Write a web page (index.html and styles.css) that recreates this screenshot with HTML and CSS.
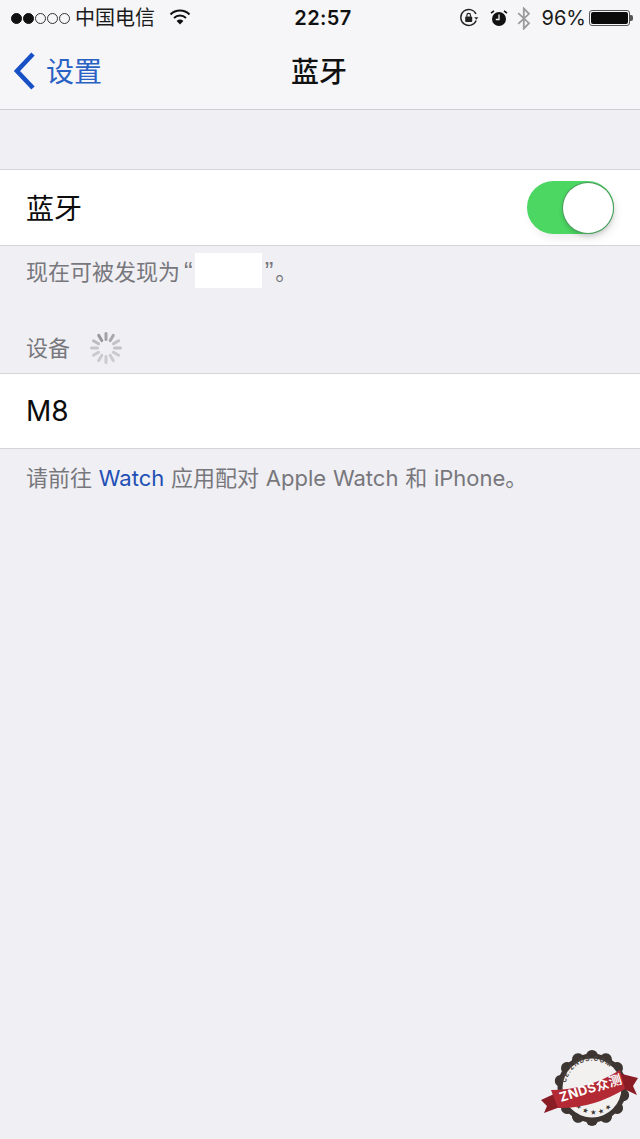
FILE: index.html
```html
<!DOCTYPE html>
<html lang="zh">
<head>
<meta charset="utf-8">
<title>蓝牙</title>
<link rel="stylesheet" href="styles.css">
</head>
<body>
<div class="screen">
  <header class="topbar">
    <div class="status">
      <div class="status-left">
        <span class="dots"><i class="dot on"></i><i class="dot on"></i><i class="dot"></i><i class="dot"></i><i class="dot"></i></span>
        <span class="carrier">中国电信</span>
        <svg class="wifi" width="22" height="16" viewBox="0 0 22 16"><path d="M1.500 5.500a13.500 13.500 0 0 1 19 0" fill="none" stroke="#111" stroke-width="2"/><path d="M5 9a8.600 8.600 0 0 1 12 0" fill="none" stroke="#111" stroke-width="2"/><path d="M11 15.500 7.600 12a4.800 4.800 0 0 1 6.800 0Z" fill="#111"/></svg>
      </div>
      <span class="time">22:57</span>
      <div class="status-right">
        <svg class="ico-lock" width="20" height="20" viewBox="0 0 20 20"><path d="M17.200 12.500A8 8 0 1 1 17 6" fill="none" stroke="#222" stroke-width="1.400"/><path d="m15.200 9.200 4.200 0-2.100 2.600Z" fill="#222"/><rect x="6.200" y="8.600" width="7" height="5.400" rx=".8" fill="#222"/><path d="M7.900 8.800V7.200a1.800 1.800 0 0 1 3.600 0v1.600" fill="none" stroke="#222" stroke-width="1.200"/></svg>
        <svg class="ico-alarm" width="18" height="18" viewBox="0 0 18 18"><circle cx="9" cy="10" r="7" fill="#111"/><path d="M9 5.500V10.500H5.800" fill="none" stroke="#f6f6f8" stroke-width="1.300"/><path d="M1 4.200 4 1.800M17 4.200 14 1.800" stroke="#111" stroke-width="1.600"/></svg>
        <svg class="ico-bt" width="14" height="23" viewBox="0 0 14 23"><path d="M1.200 6.200 12 16.200 6.800 21.600V1.400L12 6.800 1.200 16.800" fill="none" stroke="#9a9a9c" stroke-width="1.800"/></svg>
        <span class="pct">96%</span>
        <span class="battery"><span class="battery-fill"></span></span><span class="battery-cap"></span>
      </div>
    </div>
    <nav class="navbar">
      <div class="back">
        <svg class="chev" width="24" height="38" viewBox="0 0 24 38"><path d="M21 2 5 19l16 17" fill="none" stroke="#1650c4" stroke-width="4.600"/></svg>
        <span>设置</span>
      </div>
      <h1 class="title">蓝牙</h1>
    </nav>
  </header>

  <section class="row row-first">
    <span class="row-label">蓝牙</span>
    <span class="switch"><span class="knob"></span></span>
  </section>
  <p class="note note-first">现在可被发现为<span class="q">“</span><span class="redact"></span><span class="q">”</span><span class="stop">。</span></p>

  <div class="section-head">
    <span>设备</span>
    <svg class="spinner" width="34" height="34" viewBox="0 0 34 34">
      <g stroke="#c2c2c6" stroke-width="3" stroke-linecap="round">
        <path d="M17 2.500v6" stroke="#a3a3a7"/><path d="M24.250 4.400l-3 5.200" stroke="#a9a9ad"/><path d="M29.600 9.750l-5.200 3"/><path d="M31.500 17h-6"/><path d="M29.600 24.250l-5.200-3" stroke="#cbcbcf"/><path d="M24.250 29.600l-3-5.200" stroke="#cbcbcf"/><path d="M17 31.500v-6" stroke="#cbcbcf"/><path d="M9.750 29.600l3-5.200" stroke="#cbcbcf"/><path d="M4.400 24.250l5.200-3" stroke="#cbcbcf"/><path d="M2.500 17h6" stroke="#c6c6ca"/><path d="M4.400 9.750l5.200 3" stroke="#bcbcc0"/><path d="M9.750 4.400l3 5.200" stroke="#98989c"/>
      </g>
    </svg>
  </div>
  <section class="row">
    <span class="row-label">M8</span>
  </section>
  <p class="note note-last">请前往 <span class="link">Watch</span> 应用配对 Apple Watch 和 iPhone。</p>

  <svg class="stamp" width="100" height="80" viewBox="0 0 100 80">
    <defs>
      <path id="arc-top" d="M26 33A27 27 0 0 1 72 19"/>
      <path id="arc-low" d="M35 56A25 25 0 0 0 78 46"/>
    </defs>
    <g fill="#3c3532">
      <circle cx="52" cy="38" r="34.500"/>
      <circle cx="52" cy="6" r="6"/>
      <circle cx="52" cy="6" r="6" transform="rotate(25.700 52 38)"/>
      <circle cx="52" cy="6" r="6" transform="rotate(51.400 52 38)"/>
      <circle cx="52" cy="6" r="6" transform="rotate(77.100 52 38)"/>
      <circle cx="52" cy="6" r="6" transform="rotate(102.800 52 38)"/>
      <circle cx="52" cy="6" r="6" transform="rotate(128.500 52 38)"/>
      <circle cx="52" cy="6" r="6" transform="rotate(154.200 52 38)"/>
      <circle cx="52" cy="6" r="6" transform="rotate(180 52 38)"/>
      <circle cx="52" cy="6" r="6" transform="rotate(205.700 52 38)"/>
      <circle cx="52" cy="6" r="6" transform="rotate(231.400 52 38)"/>
      <circle cx="52" cy="6" r="6" transform="rotate(257.100 52 38)"/>
      <circle cx="52" cy="6" r="6" transform="rotate(282.800 52 38)"/>
      <circle cx="52" cy="6" r="6" transform="rotate(308.500 52 38)"/>
      <circle cx="52" cy="6" r="6" transform="rotate(334.200 52 38)"/>
    </g>
    <circle cx="52" cy="38" r="29.500" fill="#f3f1ef"/>
    <text class="stamp-arc"><textPath href="#arc-top">CE.ZNDS.COM</textPath></text>
    <text class="stamp-stars"><textPath href="#arc-low">★★★★★</textPath></text>
    <path d="M14 44 1 50 7 56 4 63 20 57Z" fill="#8a1c26"/>
    <path d="M78 23 98 28 93 36 97 45 84 39Z" fill="#8a1c26"/>
    <path d="M11 40Q48 40 80 20L85 39Q52 59 18 58Z" fill="#b32a35"/>
    <text class="stamp-label" x="21" y="52" transform="rotate(-17 21 52)">ZNDS众测</text>
  </svg>
</div>
</body>
</html>
```
FILE: styles.css
```css
* { box-sizing: border-box; }
html, body { margin: 0; padding: 0; }
body {
  font-family: Inter, "Noto Sans CJK SC", sans-serif;
  background: #efeff4;
  color: #0c0c0c;
}
.screen { position: relative; width: 640px; height: 1139px; overflow: hidden; }
.topbar { height: 110px; background: #f6f6f9; border-bottom: 1px solid #cfcfd3; }
.status { display: grid; grid-template-columns: 1fr auto 1fr; align-items: center; height: 36px; padding: 0 7px 0 11px; }
.status-left { display: flex; align-items: center; }
.dots { display: flex; gap: 1px; }
.dot { width: 11px; height: 11px; border-radius: 50%; border: 1px solid #333; }
.dot.on { background: #111; border-color: #111; }
.carrier { font-size: 20px; line-height: 36px; margin-left: 5px; color: #1a1a1a; }
.wifi { margin-left: 14px; margin-top: -2px; }
.time { font-size: 20px; font-weight: 600; letter-spacing: .4px; margin-left: 2px; color: #111; }
.status-right { display: flex; align-items: center; justify-content: flex-end; }
.ico-alarm { margin-left: 11px; }
.ico-bt { margin-left: 9px; }
.pct { font-size: 20px; margin-left: 11px; color: #1a1a1a; }
.battery { width: 41px; height: 16px; margin-left: 3px; border: 1px solid #555; border-radius: 3px; padding: 1px; display: block; }
.battery-fill { display: block; height: 100%; background: #0a0a0a; border-radius: 2px; }
.battery-cap { width: 3px; height: 6px; background: #555; border-radius: 0 2px 2px 0; }
.navbar { position: relative; display: flex; align-items: center; justify-content: center; height: 73px; padding: 0 2px 6px 0; }
.back { position: absolute; left: 12px; top: 0; bottom: 0; display: flex; align-items: center; gap: 10px; padding-bottom: 6px; color: #2a62c4; font-size: 28px; }
.chev { margin-top: 3px; }
.title { margin: 0; font-size: 28px; font-weight: 500; color: #111; }
.row { display: flex; align-items: center; justify-content: space-between; height: 76px; padding: 0 26px; background: #fff; border-top: 1px solid #d5d5d9; border-bottom: 1px solid #d5d5d9; }
.row-first { height: 77px; margin-top: 59px; }
.row-first .row-label { margin-top: -2px; }
.row-label { font-size: 28px; color: #0c0c0c; }
.switch { display: flex; justify-content: flex-end; align-items: center; width: 87px; height: 53px; border-radius: 27px; background: #4cd662; box-shadow: 3px 5px 8px rgba(0,0,0,.07); }
.knob { width: 50px; height: 50px; margin-right: 1px; border-radius: 50%; background: #fff; box-shadow: 0 0 0 1px #4a9e5e, 0 3px 5px rgba(0,0,0,.18); }
.note { margin: 0; padding: 0 26px; font-size: 22px; color: #77777c; }
.note-first { height: 49px; margin-top: 2px; line-height: 49px; }
.q { font-family: "Liberation Sans", sans-serif; font-size: 26px; line-height: 20px; margin-left: 4px; }
.stop { margin-left: 2px; }
.redact { display: inline-block; width: 67px; height: 35px; margin-left: 2px; margin-right: -1px; vertical-align: -8px; background: #fff; }
.section-head { display: flex; align-items: center; gap: 19px; height: 76px; padding: 22px 26px 0; font-size: 22px; color: #77777c; }
.spinner { margin-top: 4px; }
.note-last { height: 54px; line-height: 58px; word-spacing: .6px; white-space: pre; }
.link { color: #1f4fb4; }
.stamp { position: absolute; left: 540px; top: 1050px; }
.stamp-arc { font: 700 6.500px Inter, sans-serif; letter-spacing: .9px; fill: #4a4542; }
.stamp-label { font: 700 13px Inter, "Noto Sans CJK SC", sans-serif; letter-spacing: .4px; fill: #fff; }
.stamp-stars { font: 7px "DejaVu Sans", sans-serif; letter-spacing: 2.500px; fill: #3c3532; }
```
